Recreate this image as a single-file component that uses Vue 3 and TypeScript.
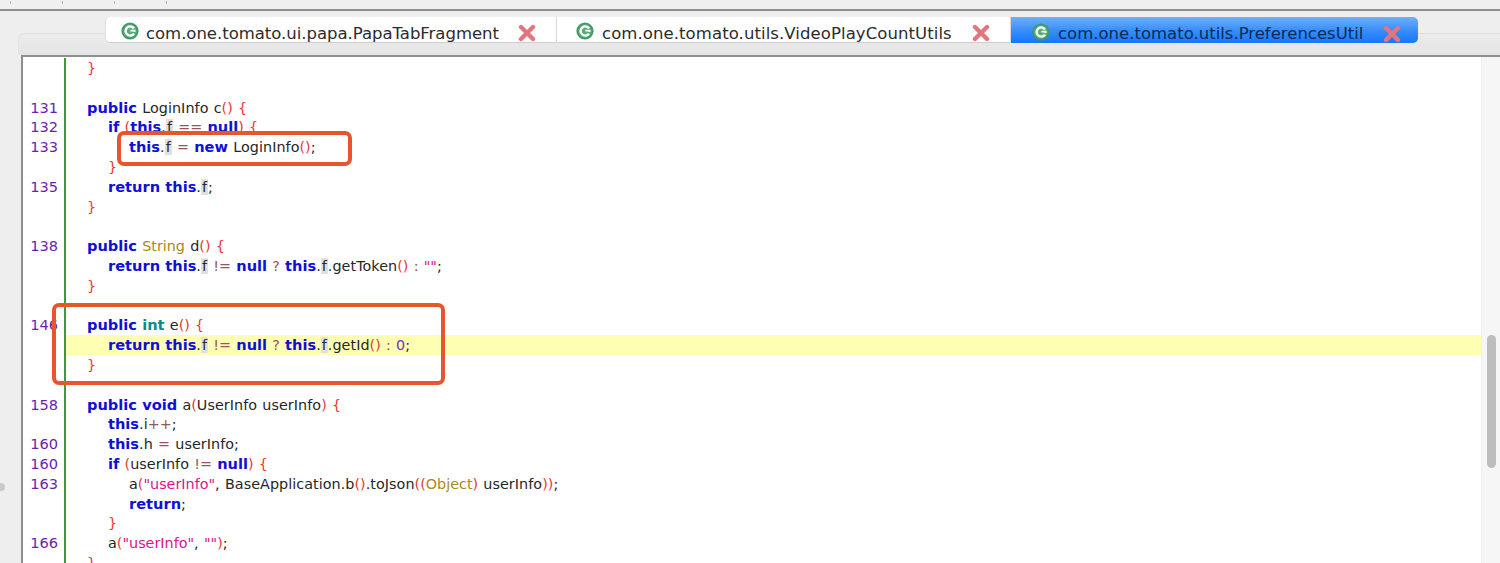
<script setup lang="ts">
type Token = [string, string]
interface Line { n?: string; indent: number; tokens: Token[] }

const k = (t: string): Token => ['kw', t]
const p = (t: string): Token => ['pu', t]
const x = (t: string): Token => ['tx', t]
const o = (t: string): Token => ['op', t]
const f: Token = ['occ', 'f']

const lines: Line[] = [
  { indent: 0, tokens: [p('}')] },
  { indent: 0, tokens: [] },
  { n: '131', indent: 0, tokens: [k('public'), x(' LoginInfo c'), p('()'), x(' '), p('{')] },
  { n: '132', indent: 1, tokens: [k('if'), x(' '), p('('), k('this'), x('.'), f, x(' '), o('=='), x(' '), k('null'), p(')'), x(' '), p('{')] },
  { n: '133', indent: 2, tokens: [k('this'), x('.'), f, x(' '), o('='), x(' '), k('new'), x(' LoginInfo'), p('()'), x(';')] },
  { indent: 1, tokens: [p('}')] },
  { n: '135', indent: 1, tokens: [k('return'), x(' '), k('this'), x('.'), f, x(';')] },
  { indent: 0, tokens: [p('}')] },
  { indent: 0, tokens: [] },
  { n: '138', indent: 0, tokens: [k('public'), x(' '), ['ty', 'String'], x(' d'), p('()'), x(' '), p('{')] },
  { indent: 1, tokens: [k('return'), x(' '), k('this'), x('.'), f, x(' '), o('!='), x(' '), k('null'), x(' '), o('?'), x(' '), k('this'), x('.'), f, x('.getToken'), p('()'), x(' '), o(':'), x(' '), ['st', '""'], x(';')] },
  { indent: 0, tokens: [p('}')] },
  { indent: 0, tokens: [] },
  { n: '146', indent: 0, tokens: [k('public'), x(' '), ['pr', 'int'], x(' e'), p('()'), x(' '), p('{')] },
  { indent: 1, tokens: [k('return'), x(' '), k('this'), x('.'), f, x(' '), o('!='), x(' '), k('null'), x(' '), o('?'), x(' '), k('this'), x('.'), f, x('.getId'), p('()'), x(' '), o(':'), x(' '), ['nu', '0'], x(';')] },
  { indent: 0, tokens: [p('}')] },
  { indent: 0, tokens: [] },
  { n: '158', indent: 0, tokens: [k('public'), x(' '), k('void'), x(' a'), p('('), x('UserInfo userInfo'), p(')'), x(' '), p('{')] },
  { indent: 1, tokens: [k('this'), x('.i'), o('++'), x(';')] },
  { n: '160', indent: 1, tokens: [k('this'), x('.h '), o('='), x(' userInfo;')] },
  { n: '160', indent: 1, tokens: [k('if'), x(' '), p('('), x('userInfo '), o('!='), x(' '), k('null'), p(')'), x(' '), p('{')] },
  { n: '163', indent: 2, tokens: [x('a'), p('('), ['st', '"userInfo"'], x(', BaseApplication.b'), p('()'), x('.toJson'), p('(('), ['ty', 'Object'], p(')'), x(' userInfo'), p('))'), x(';')] },
  { indent: 2, tokens: [k('return'), x(';')] },
  { indent: 1, tokens: [p('}')] },
  { n: '166', indent: 1, tokens: [x('a'), p('('), ['st', '"userInfo"'], x(', '), ['st', '""'], p(')'), x(';')] },
  { indent: 0, tokens: [p('}')] },
]

const tabs = [
  { name: 'com.one.tomato.ui.papa.PapaTabFragment', active: false },
  { name: 'com.one.tomato.utils.VideoPlayCountUtils', active: false },
  { name: 'com.one.tomato.utils.PreferencesUtil', active: true },
]
const HIGHLIGHT = 14
</script>

<template>
  <div class="window">
    <div class="ruler"><i v-for="t in 4" :key="t" class="tick"></i></div>
    <div class="panel">
      <div class="tabband">
        <div class="tabs">
          <div v-for="t in tabs" :key="t.name" class="tab" :class="{ active: t.active }">
            <svg class="cicon" viewBox="0 0 18 18" width="18" height="18">
              <circle cx="9" cy="9" r="8.6" fill="#3f9a63" />
              <circle cx="9" cy="9" r="6.8" fill="#56ad78" />
              <path d="M13 6.4 A4.6 4.6 0 1 0 13 11.6" fill="none" stroke="#fff" stroke-width="2.4" />
              <path d="M9.4 8.6 H13.6 V10" fill="none" stroke="#fff" stroke-width="1.8" />
            </svg>
            <span class="tabname">{{ t.name }}</span>
            <svg class="close" viewBox="0 0 18 18" width="18" height="18">
              <path d="M3 3 L15 15 M15 3 L3 15" stroke="#e3757f" stroke-width="4.4" stroke-linecap="round" />
            </svg>
          </div>
        </div>
      </div>
      <div class="editor">
        <div class="code">
          <div v-for="(l, i) in lines" :key="i" class="row" :class="{ hl: i === HIGHLIGHT }">
            <span class="num">{{ l.n }}</span>
            <span class="src" :class="'ind' + l.indent"><span v-for="(t, j) in l.tokens" :key="j" :class="t[0]">{{ t[1] }}</span></span>
          </div>
        </div>
        <div class="scrollbar"><div class="thumb"></div></div>
      </div>
    </div>
    <div class="mark mark1"></div>
    <div class="mark mark2"></div>
    <div class="bump"></div>
  </div>
</template>

<style>
html, body { margin: 0; height: 100%; overflow: hidden; background: #eeeeee; }
</style>

<style scoped>
.window {
  position: relative;
  width: 1500px;
  height: 563px;
  overflow: hidden;
  background: #eeeeee;
  font-family: "DejaVu Sans", sans-serif;
}
.ruler {
  box-sizing: border-box;
  height: 11px;
  padding: 1px 0 0 10px;
  display: flex;
  gap: 51px;
  background: #f0f0f0;
  border-bottom: 2px solid #8e8e8e;
}
.tick { width: 1px; height: 3px; background: #b5b5b5; }
.panel { padding-top: 6px; }
.tabband {
  position: relative;
  height: 38px;
  display: flex;
  align-items: flex-start;
  margin-left: 18px;
  padding-left: 87px;
}
.tabband::before {
  content: "";
  position: absolute;
  left: 0;
  right: 0;
  top: 16px;
  bottom: 0;
  border-top: 1px solid #dedede;
  border-left: 1px solid #e4e4e4;
  border-top-left-radius: 6px;
  background: linear-gradient(#ececec, #e4e4e4);
}
.tabs { position: relative; display: flex; height: 26px; }
.tab {
  box-sizing: border-box;
  display: flex;
  align-items: center;
  height: 26px;
  padding-top: 7px;
  background: #ffffff;
  border-bottom: 1px solid #cfcfcf;
  border-right: 1px solid #d8d8d8;
  color: #2b2b2b;
}
.tab:nth-child(1) { width: 452px; padding-left: 15px; border-top-left-radius: 5px; border-bottom-left-radius: 5px; border-left: 1px solid #dddddd; }
.tab:nth-child(2) { width: 454px; padding-left: 19px; }
.tab:nth-child(3) { width: 407px; padding-left: 21px; }
.tab.active {
  background: linear-gradient(#6fb0fa, #3a8ffb 50%, #1577fb);
  border: none;
  border-top-right-radius: 5px;
  border-bottom-right-radius: 5px;
  color: #0c2a55;
}
.cicon { flex: none; margin-bottom: 4px; }
.tabname {
  margin-left: 8px;
  font-size: 16.5px;
  white-space: pre;
  flex: 1;
}
.tab:nth-child(1) .tabname { margin-left: 7px; letter-spacing: -0.03px; }
.tab:nth-child(2) .tabname { margin-left: 8px; letter-spacing: 0.08px; }
.close { flex: none; margin-right: 20px; }
.tab.active .close { margin-right: 17px; }
.editor {
  display: flex;
  margin-left: 21px;
  height: 508px;
  background: #fff;
  border-top: 2px solid #8e8e8e;
  border-left: 2px solid #8e8e8e;
}
.code {
  flex: 1;
  min-width: 0;
  padding-top: 1px;
  font-size: 14.35px;
  word-spacing: 0.6px;
  background: linear-gradient(#3c9a3c, #3c9a3c) 41px 1px / 2px 100% no-repeat;
}
.row { display: flex; height: 19.8px; line-height: 20px; white-space: pre; }
.row.hl .src { background: #ffffb4; }
.num {
  box-sizing: border-box;
  width: 41px;
  flex: none;
  padding-right: 6px;
  text-align: right;
  color: #6b1fb0;
  font-size: 14.6px;
}
.src { flex: 1; margin-left: 2px; padding-left: 21px; }
.ind1 { padding-left: 42px; }
.ind2 { padding-left: 63px; }
.kw { color: #0f0fd8; font-weight: 700; font-size: 14.6px; }
.pr { color: #0a8a8a; font-weight: 700; font-size: 14.6px; }
.pu { color: #e8383a; }
.op { color: #a0505a; }
.tx { color: #262626; letter-spacing: 0.05px; }
.ty { color: #a88a10; }
.st { color: #d6148e; }
.nu { color: #7a30c0; }
.occ { color: #262626; background: #e0e0e0; padding: 0 1px; }
.scrollbar {
  flex: none;
  width: 19px;
  background: #f6f6f6;
  border-left: 1px solid #efefef;
  box-sizing: border-box;
  padding: 278px 4px 0 5px;
}
.thumb { height: 133px; border-radius: 5px; background: #bdbdbd; }
.mark {
  position: absolute;
  box-sizing: border-box;
  border: 4px solid #e6552b;
  border-radius: 7px;
  pointer-events: none;
}
.mark1 { left: 117px; top: 131px; width: 235px; height: 35px; }
.mark2 { left: 52px; top: 303px; width: 393px; height: 82px; }
.bump {
  position: absolute;
  left: -3px;
  top: 483px;
  width: 8px;
  height: 8px;
  border-radius: 50%;
  background: #c9c9c9;
}
</style>
